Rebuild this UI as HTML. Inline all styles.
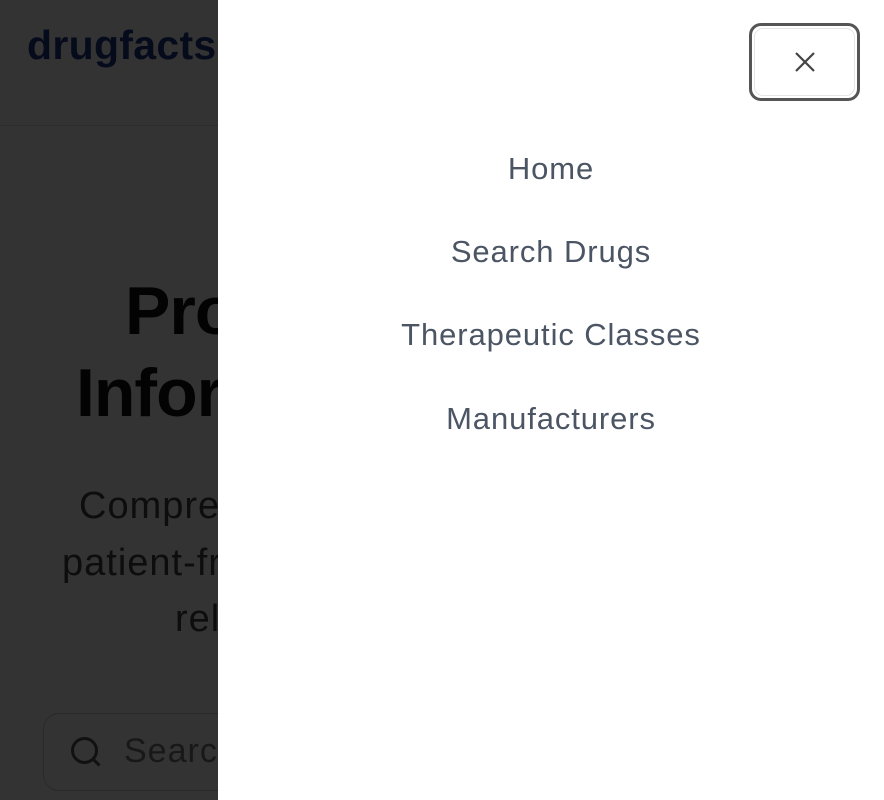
<!DOCTYPE html>
<html><head><style>
body{margin:0;width:884px;height:800px;overflow:hidden;position:relative;font-family:"Liberation Sans",sans-serif;background:#fff}
.bg{position:absolute;inset:0}
.hdr{position:absolute;left:0;top:0;width:884px;height:125px;border-bottom:1px solid #ddd;background:#fff}
.logo{position:absolute;left:27px;top:22px;font-size:41px;font-weight:bold;color:#1e3a8a;letter-spacing:0.3px}
.t{position:absolute;white-space:nowrap}
.h{font-size:68px;font-weight:bold;color:#111;letter-spacing:-1px}
.s{font-size:38px;color:#444;letter-spacing:1px}
.search{position:absolute;left:43px;top:713px;width:800px;height:76px;border:1px solid #ccc;border-radius:16px}
.ov{position:absolute;inset:0;background:rgba(0,0,0,.8)}
.panel{position:absolute;left:218px;top:0;width:666px;height:800px;background:#fff}
.nav{position:absolute;left:0;width:666px;text-align:center;font-size:31px;color:#4b5563;letter-spacing:0.9px}
.close{position:absolute;left:749px;top:23px;width:105px;height:72px;border:3px solid #555;border-radius:12px;box-sizing:content-box}
.close:after{content:"";position:absolute;inset:2px;border:1px solid #e5e5e5;border-radius:9px}
</style></head><body>
<div class="bg">
<div class="hdr"><div class="logo">drugfacts</div></div>
<div class="t h" style="left:125px;top:272px">Professional</div>
<div class="t h" style="left:76px;top:354px">Information</div>
<div class="t s" style="left:79px;top:485px">Comprehensive</div>
<div class="t s" style="left:62px;top:542px">patient-friendly</div>
<div class="t s" style="left:175px;top:598px">reliable</div>
<div class="search">
<svg style="position:absolute;left:24px;top:20px" width="36" height="36" viewBox="0 0 24 24" fill="none" stroke="#555" stroke-width="2"><circle cx="11" cy="11" r="8"/><path d="M21 21l-4.3-4.3"/></svg>
<span class="t" style="left:80px;top:18px;font-size:34px;color:#777;letter-spacing:1px">Search drugs</span></div>
</div>
<div class="ov"></div>
<div class="panel">
<div class="nav" style="top:151px">Home</div>
<div class="nav" style="top:234px">Search Drugs</div>
<div class="nav" style="top:317px">Therapeutic Classes</div>
<div class="nav" style="top:401px">Manufacturers</div>
</div>
<div class="close"><svg style="position:absolute;left:42px;top:25px" width="22" height="22" viewBox="0 0 22 22" stroke="#444" stroke-width="2.2"><path d="M2 2L20 20M20 2L2 20"/></svg></div>
</body></html>
